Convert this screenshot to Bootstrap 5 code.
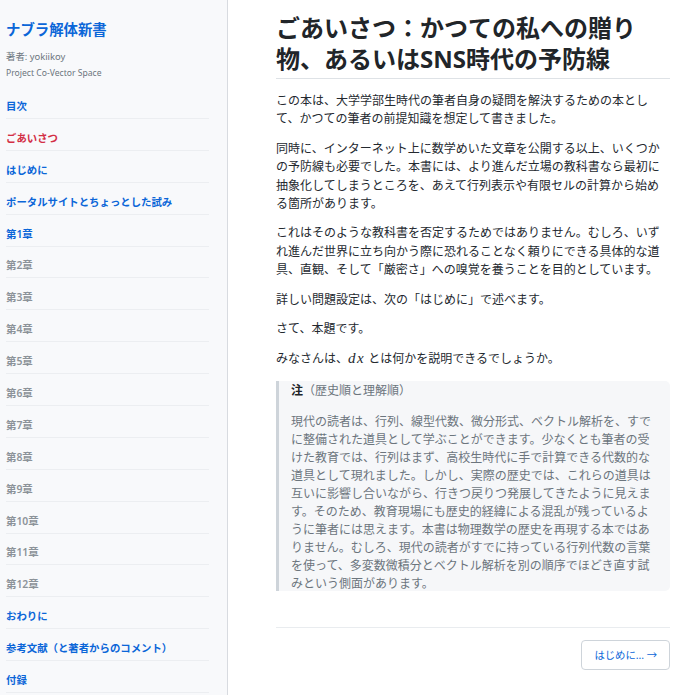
<!DOCTYPE html>
<html lang="ja">
<head>
    <meta charset="UTF-8">
    <meta name="viewport" content="width=device-width, initial-scale=1.0">
    <title>ごあいさつ</title>
    <link href="https://cdn.jsdelivr.net/npm/bootstrap@5.3.0/dist/css/bootstrap.min.css" rel="stylesheet">
    <style>
        html, body { height: 100%; overflow: hidden; }
        body { font-family: "Noto Sans", "Noto Sans CJK JP", sans-serif; color: #24292f; font-size: 12px; line-height: 18.4px; }
        .side-pane { width: 228px; flex: none; height: 100vh; overflow: hidden; background: #f8f9fb; border-right: 1px solid #d8dbe0; padding: 19px 18px 0 6px; }
        .side-title { font-size: 14.4px; line-height: 22px; font-weight: 700; color: #0b66d8; margin: 0 0 7px; }
        .side-meta { font-size: 8.6px; line-height: 17px; color: #6c757d; margin: 0; }
        .side-author { font-size: 9.4px; }
        .side-toc { margin-top: 16px; }
        .side-toc a { display: block; font-size: 10.4px; line-height: 16px; font-weight: 600; color: #0b66d8; text-decoration: none; padding-bottom: 4px; border-bottom: 1px solid #eceef1; margin-bottom: 10.9px; }
        .side-toc a.on { color: #d32f45; }
        .side-toc a.off { color: #8c9399; }
        .main-pane { flex: 1; min-width: 0; padding: 12px 28px 0 48px; }
        .page-title { font-size: 24px; line-height: 31px; font-weight: 700; color: #212529; padding-bottom: 4px; margin: 0 0 13px; border-bottom: 1px solid #dee2e6; }
        .main-pane p { margin: 0 0 11px; }
        .math-var { font-family: "Liberation Serif", serif; font-style: italic; font-size: 15px; letter-spacing: 1.5px; }
        .note-box { background: #f6f7f9; border-left: 3px solid #ced4da; border-radius: 0 5px 5px 0; color: #6c757d; line-height: 18px; padding: 1px 12px 0 12px; margin-top: 12px; height: 210px; overflow: hidden; }
        .note-box strong { color: #212529; }
        .main-pane .note-box p { margin: 0 0 13px; }
        .page-foot { margin-top: 36px; border-top: 1px solid #e9ecef; padding-top: 12px; }
        .next-btn { font-size: 10.4px; line-height: 16px; color: #0b66d8; border: 1px solid #ced4da; border-radius: 4px; padding: 6px 12px; text-decoration: none; background: #fff; letter-spacing: -0.05px; }
    </style>
</head>
<body>
    <div class="d-flex">
        <nav class="side-pane">
            <h1 class="side-title">ナブラ解体新書</h1>
            <p class="side-meta side-author">著者: yokiikoy</p>
            <p class="side-meta">Project Co-Vector Space</p>
            <div class="side-toc">
                <a href="#">目次</a>
                <a href="#" class="on">ごあいさつ</a>
                <a href="#">はじめに</a>
                <a href="#">ポータルサイトとちょっとした試み</a>
                <a href="#">第1章</a>
                <a href="#" class="off">第2章</a>
                <a href="#" class="off">第3章</a>
                <a href="#" class="off">第4章</a>
                <a href="#" class="off">第5章</a>
                <a href="#" class="off">第6章</a>
                <a href="#" class="off">第7章</a>
                <a href="#" class="off">第8章</a>
                <a href="#" class="off">第9章</a>
                <a href="#" class="off">第10章</a>
                <a href="#" class="off">第11章</a>
                <a href="#" class="off">第12章</a>
                <a href="#">おわりに</a>
                <a href="#">参考文献（と著者からのコメント）</a>
                <a href="#">付録</a>
            </div>
        </nav>
        <main class="main-pane">
            <h2 class="page-title">ごあいさつ：かつての私への贈り物、あるいはSNS時代の予防線</h2>
            <p>この本は、大学学部生時代の筆者自身の疑問を解決するための本として、かつての筆者の前提知識を想定して書きました。</p>
            <p>同時に、インターネット上に数学めいた文章を公開する以上、いくつかの予防線も必要でした。本書には、より進んだ立場の教科書なら最初に抽象化してしまうところを、あえて行列表示や有限セルの計算から始める箇所があります。</p>
            <p>これはそのような教科書を否定するためではありません。むしろ、いずれ進んだ世界に立ち向かう際に恐れることなく頼りにできる具体的な道具、直観、そして「厳密さ」への嗅覚を養うことを目的としています。</p>
            <p>詳しい問題設定は、次の「はじめに」で述べます。</p>
            <p>さて、本題です。</p>
            <p>みなさんは、<span class="math-var">dx</span> とは何かを説明できるでしょうか。</p>
            <div class="note-box">
                <p><strong>注</strong>（歴史順と理解順）</p>
                <p>現代の読者は、行列、線型代数、微分形式、ベクトル解析を、すでに整備された道具として学ぶことができます。少なくとも筆者の受けた教育では、行列はまず、高校生時代に手で計算できる代数的な道具として現れました。しかし、実際の歴史では、これらの道具は互いに影響し合いながら、行きつ戻りつ発展してきたように見えます。そのため、教育現場にも歴史的経緯による混乱が残っているように筆者には思えます。本書は物理数学の歴史を再現する本ではありません。むしろ、現代の読者がすでに持っている行列代数の言葉を使って、多変数微積分とベクトル解析を別の順序でほどき直す試みという側面があります。</p>
            </div>
            <div class="page-foot d-flex justify-content-end">
                <a href="#" class="next-btn">はじめに... →</a>
            </div>
        </main>
    </div>
    <script src="https://cdn.jsdelivr.net/npm/bootstrap@5.3.0/dist/js/bootstrap.bundle.min.js"></script>
</body>
</html>
